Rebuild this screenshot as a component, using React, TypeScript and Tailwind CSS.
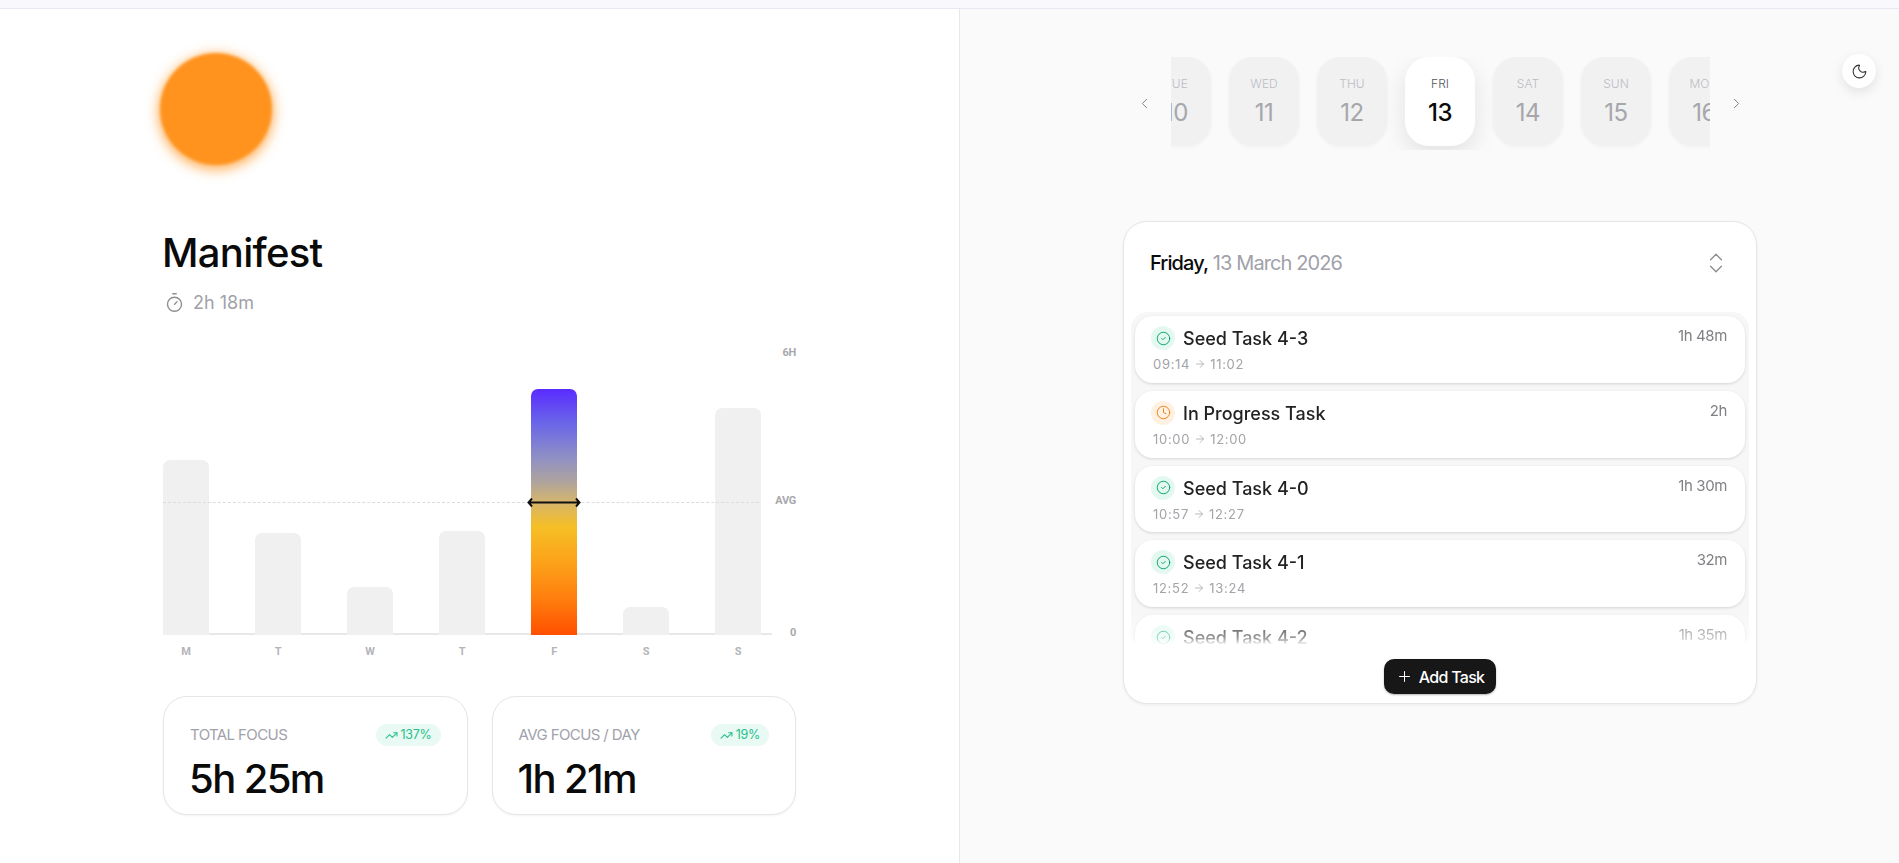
import React from 'react';
import { ArrowRight, ChevronLeft, ChevronRight, ChevronsUpDown, CircleCheck, Clock, Moon, Plus, Timer, TrendingUp } from 'lucide-react';

const bars = [
  { day: 'M', height: 'h-[175px]' },
  { day: 'T', height: 'h-[102px]' },
  { day: 'W', height: 'h-[48px]' },
  { day: 'T', height: 'h-[104px]' },
  { day: 'F', height: 'h-[246px]', active: true },
  { day: 'S', height: 'h-[28px]' },
  { day: 'S', height: 'h-[227px]' }
];

const days = [
  { label: 'TUE', num: 10 },
  { label: 'WED', num: 11 },
  { label: 'THU', num: 12 },
  { label: 'FRI', num: 13, active: true },
  { label: 'SAT', num: 14 },
  { label: 'SUN', num: 15 },
  { label: 'MON', num: 16 }
];

const tasks = [
  { title: 'Seed Task 4-3', from: '09:14', to: '11:02', duration: '1h 48m', done: true },
  { title: 'In Progress Task', from: '10:00', to: '12:00', duration: '2h', done: false },
  { title: 'Seed Task 4-0', from: '10:57', to: '12:27', duration: '1h 30m', done: true },
  { title: 'Seed Task 4-1', from: '12:52', to: '13:24', duration: '32m', done: true },
  { title: 'Seed Task 4-2', from: '14:10', to: '15:45', duration: '1h 35m', done: true }
];

const stats = [
  { label: 'TOTAL FOCUS', change: '137%', value: '5h 25m' },
  { label: 'AVG FOCUS / DAY', change: '19%', value: '1h 21m' }
];

function Chart() {
  return (
    <div className="relative mt-[27px]">
      <div className="relative h-[294px] w-[609px]">
        <div className="absolute bottom-0 left-0 h-[2px] w-full bg-[#e8e8ea]" />
        <div className="relative flex h-full items-end gap-[46px]">
          {bars.map((bar, i) => (
            <div
              key={i}
              className={`w-[46px] rounded-t-[7px] ${bar.height} ${bar.active ? 'bg-[linear-gradient(180deg,#5a2cff_0%,#6a66e8_14%,#8f90c4_28%,#b0a49c_38%,#d6b56c_46%,#f6bf26_56%,#fca31a_70%,#ff7f0e_85%,#ff5000_100%)]' : 'bg-[#f0f0f1]'}`}
            />
          ))}
        </div>
        <div className="absolute left-0 top-[161px] w-[596px] border-t border-dashed border-[#dcdcde]" />
        <svg className="absolute left-[364px] top-[156px]" width="54" height="11" viewBox="0 0 54 11" fill="none" stroke="#111" strokeWidth="2">
          <path d="M1.5 5.5H52.5M5 1.5L1.5 5.5L5 9.5M49 1.5L52.5 5.5L49 9.5" />
        </svg>
      </div>
      <div className="mt-[11px] flex gap-[46px] font-['Roboto',sans-serif] text-[11px] leading-3 font-bold tracking-[-0.3px] text-[#b4b4b8]">
        {bars.map((bar, i) => (
          <div key={i} className="w-[46px] text-center">{bar.day}</div>
        ))}
      </div>
      <div className="font-['Roboto',sans-serif] text-[11px] leading-3 font-bold tracking-[-0.3px] text-[#a8a8ac]">
        <span className="absolute right-0 top-[6px]">6H</span>
        <span className="absolute right-0 top-[154px]">AVG</span>
        <span className="absolute right-0 top-[286px]">0</span>
      </div>
    </div>
  );
}

function StatCard({ label, change, value }: { label: string; change: string; value: string }) {
  return (
    <div className="h-[119px] flex-1 rounded-3xl border border-[#e6e6e8] bg-white px-[26px] pt-[27px] shadow-[0_1px_2px_rgba(0,0,0,0.05)]">
      <div className="flex h-[22px] items-center justify-between">
        <span className="text-[15px] tracking-[-0.6px] text-[#a1a1aa]">{label}</span>
        <span className="flex h-[22px] items-center gap-[3px] rounded-full bg-[#e8faf3] px-[9px] text-[12.5px] tracking-[-0.3px] text-[#25c08b]">
          <TrendingUp size={13} strokeWidth={2} />
          {change}
        </span>
      </div>
      <div className="mt-[9px] -ml-px text-[40px] leading-[48px] font-medium tracking-[-1.6px] text-[#0a0a0a]">{value}</div>
    </div>
  );
}

function DayStrip() {
  return (
    <div className="flex items-center justify-center gap-[18px]">
      <ChevronLeft size={17} strokeWidth={1.3} className="text-[#77777c]" />
      <div className="flex w-[539px] shrink-0 justify-center gap-[18px] overflow-hidden pb-[4px]">
        {days.map((d) => (
          <div
            key={d.num}
            className={`flex h-[89px] w-[70px] shrink-0 flex-col items-center rounded-[24px] pt-[19px] ${d.active ? 'bg-white shadow-[0_8px_24px_rgba(0,0,0,0.1)]' : 'bg-[#f1f1f2] shadow-[0_1px_4px_rgba(0,0,0,0.04)]'}`}
          >
            <span className={`text-[12px] leading-4 font-light ${d.active ? 'text-[#555558]' : 'text-[#bdbdc2]'}`}>{d.label}</span>
            <span className={`mt-[5px] text-[24px] leading-8 tracking-[-0.5px] ${d.active ? 'font-medium text-[#0a0a0a]' : 'text-[#a6a6ab]'}`}>{d.num}</span>
          </div>
        ))}
      </div>
      <ChevronRight size={17} strokeWidth={1.3} className="text-[#77777c]" />
    </div>
  );
}

function TaskPanel() {
  return (
    <div className="mt-[71px] h-[483px] rounded-3xl border border-[#e6e6e8] bg-white shadow-[0_1px_3px_rgba(0,0,0,0.06)]">
      <div className="mb-[9px] flex h-[81px] items-center justify-between pr-[27px] pl-[26px]">
        <div className="text-[20px] tracking-[-0.9px] text-[#a1a1aa]">
          <span className="font-medium text-[#0a0a0a]">Friday,</span> 13 March 2026
        </div>
        <ChevronsUpDown size={26} strokeWidth={1.3} className="text-[#8e8e93]" />
      </div>
      <div className="mx-[7px] flex h-[333px] flex-col gap-2 overflow-hidden rounded-t-[16px] bg-[#f7f7f7] px-[4px] pt-[4px] [mask-image:linear-gradient(180deg,#000_90%,rgba(0,0,0,0.45)_98%,transparent_100%)]">
        {tasks.map((task) => (
          <div
            key={task.title}
            className="flex h-[66.75px] shrink-0 items-start justify-between rounded-[18px] bg-white pt-[10px] pr-[18px] pl-[16px] shadow-[0_1px_3px_rgba(0,0,0,0.14)]"
          >
            <div>
              <div className="flex items-center gap-2">
                <span className={`flex h-6 w-6 items-center justify-center rounded-full ${task.done ? 'bg-[#e3f9f0] text-[#12a679]' : 'bg-[#fff1e2] text-[#f0851e]'}`}>
                  {task.done ? <CircleCheck size={15} strokeWidth={1.6} /> : <Clock size={15} strokeWidth={1.6} />}
                </span>
                <span className="relative top-px text-[18px] leading-6 font-medium text-[#222224]">{task.title}</span>
              </div>
              <div className="mt-[6px] ml-[2px] flex items-center gap-[4px] text-[13px] leading-4 tracking-[0.7px] text-[#a3a3a8]">
                {task.from}
                <ArrowRight size={12} strokeWidth={1.5} />
                {task.to}
              </div>
            </div>
            <span className="text-[15px] leading-5 tracking-[-0.4px] text-[#808085]">{task.duration}</span>
          </div>
        ))}
      </div>
      <div className="mt-[14px] flex justify-center">
        <button className="flex h-[35px] w-[112px] items-center justify-center gap-[6px] rounded-[10px] bg-[#171717] text-[16px] font-medium tracking-[-0.7px] text-white shadow-[0_1px_2px_rgba(0,0,0,0.3)]">
          <Plus size={17} strokeWidth={1.4} />
          Add Task
        </button>
      </div>
    </div>
  );
}

export default function App() {
  return (
    <div className="flex h-[863px] flex-col overflow-hidden bg-white font-['Inter',sans-serif]">
      <div className="h-[9px] border-b border-[#e8e8f0] bg-[#f8f8fd]" />
      <div className="flex flex-1">
        {/* Left: weekly focus */}
        <div className="w-[960px] border-r border-[#e8e8ea] pt-[44px] pl-[163px]">
          <div className="w-[633px]">
            <div className="-ml-[3px] h-[112px] w-[112px] rounded-full bg-[#ff931e] shadow-[0_3px_12px_2px_rgba(255,147,30,0.7)] blur-[1.5px]" />
            <h1 className="mt-[64px] -ml-px text-[40px] leading-[48px] font-medium tracking-[-0.7px] text-[#0a0a0a]">Manifest</h1>
            <div className="mt-[13px] flex h-6 items-center gap-[8px] text-[18px] text-[#a1a1aa]">
              <Timer size={21} strokeWidth={1.6} className="ml-px text-[#8e8e93]" />
              2h 18m
            </div>
            <Chart />
            <div className="mt-[38px] flex gap-[24px]">
              {stats.map((s) => (
                <StatCard key={s.label} {...s} />
              ))}
            </div>
          </div>
        </div>

        {/* Right: day view */}
        <div className="relative flex-1 bg-[#fafafa] pt-[48px] pl-[163px]">
          <div className="w-[634px]">
            <DayStrip />
            <TaskPanel />
          </div>
          <button className="absolute top-[45px] right-[23px] flex h-[34px] w-[34px] items-center justify-center rounded-full bg-white text-[#333] shadow-[0_4px_12px_rgba(0,0,0,0.1)]">
            <Moon size={17} strokeWidth={1.5} />
          </button>
        </div>
      </div>
    </div>
  );
}
